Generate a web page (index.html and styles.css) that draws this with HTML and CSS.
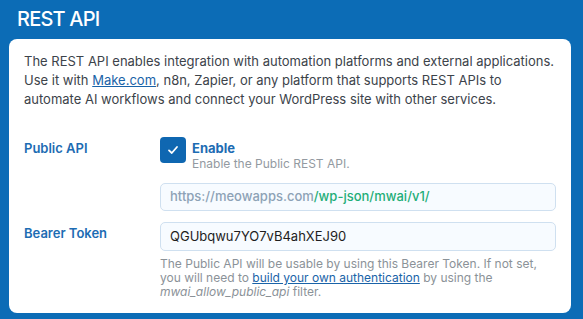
FILE: index.html
```html
<!DOCTYPE html>
<html lang="en">
<head>
    <meta charset="UTF-8">
    <meta name="viewport" content="width=device-width, initial-scale=1.0">
    <title>REST API</title>
    <link rel="stylesheet" href="styles.css">
</head>
<body>
<div class="panel">
    <h2 class="panel-title">REST API</h2>
    <div class="card">
        <p class="intro">The REST API enables integration with automation platforms and external applications. Use it with <a href="#">Make.com</a>, n8n, Zapier, or any platform that supports REST APIs to automate AI workflows and connect your WordPress site with other services.</p>

        <div class="row">
            <div class="label">Public API</div>
            <div class="field">
                <label class="check">
                    <span class="box">
                        <svg width="14" height="14" viewBox="0 0 14 14"><path d="M3 7.4 L5.8 10 L11 4" fill="none" stroke="#fff" stroke-width="1.8" stroke-linecap="round" stroke-linejoin="round"/></svg>
                    </span>
                    <span class="check-text">
                        <strong>Enable</strong>
                        <small>Enable the Public REST API.</small>
                    </span>
                </label>
                <div class="input url"><span class="base">https://meowapps.com</span><span class="path">/wp-json/mwai/v1/</span></div>
            </div>
        </div>

        <div class="row token-row">
            <div class="label">Bearer Token</div>
            <div class="field">
                <div class="input token">QGUbqwu7YO7vB4ahXEJ90</div>
                <p class="help">The Public API will be usable by using this Bearer Token. If not set, you will need to <a href="#">build your own authentication</a> by using the <em>mwai_allow_public_api</em> filter.</p>
            </div>
        </div>
    </div>
</div>
</body>
</html>
```

FILE: styles.css
```css
html, body {
    margin: 0;
    height: 100%;
}
body {
    background-color: #0c6cb6;
    font-family: Inter, "Noto Sans", sans-serif;
    color: #3c434a;
}
.panel {
    padding: 6px 12px 0 9px;
}
.panel-title {
    margin: 0 0 0 8px;
    font-size: 20px;
    font-weight: 500;
    letter-spacing: -0.8px;
    color: #fff;
    line-height: 26px;
    height: 33px;
}
.card {
    background: #fff;
    border-radius: 8px;
    padding: 13px 15px 14px 15px;
}
.intro {
    margin: 0 0 28px 0;
    font-size: 13px;
    line-height: 19px;
}
.intro a, .help a {
    color: #1a63a8;
}
.row {
    display: flex;
}
.label {
    width: 136px;
    font-size: 13px;
    font-weight: 600;
    color: #1d6cb3;
    padding-top: 3px;
}
.field {
    flex: 1;
}
.check {
    display: flex;
    gap: 6px;
}
.box {
    width: 26px;
    height: 26px;
    border-radius: 4px;
    background: #0f67b1;
    display: flex;
    align-items: center;
    justify-content: center;
}
.check-text {
    display: flex;
    flex-direction: column;
    padding-top: 3px;
}
.check-text strong {
    font-size: 13px;
    color: #1d6cb3;
    line-height: 16px;
}
.check-text small {
    font-size: 12px;
    color: #939aa1;
    line-height: 15px;
}
.input {
    box-sizing: border-box;
    border: 1.5px solid #cfe0f0;
    border-radius: 5px;
    background: #f7fbff;
    font-size: 13px;
    height: 28px;
    line-height: 25px;
    padding: 0 9px;
}
.url {
    margin-top: 12px;
    font-weight: 500;
}
.url .base {
    color: #8da2b6;
}
.url .path {
    color: #1fae78;
}
.token-row {
    margin-top: 11px;
}
.token {
    color: #1e1e1e;
    height: 29px;
    line-height: 27px;
    border-width: 1px;
}
.help {
    margin: 6px 0 0 0;
    font-size: 12px;
    line-height: 14px;
    color: #8b9298;
}
```
